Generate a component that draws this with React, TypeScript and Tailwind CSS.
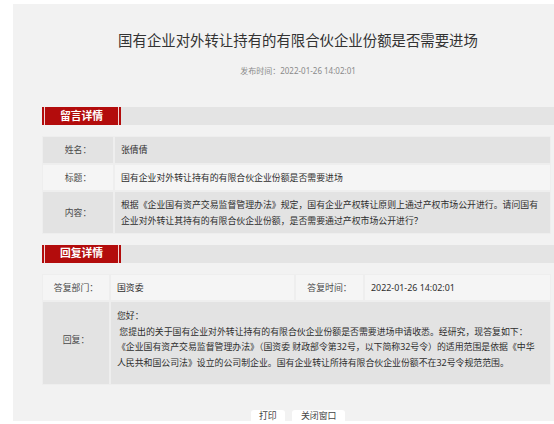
import React from "react";

const font = "font-['Noto_Sans','Noto_Sans_CJK_SC',sans-serif]";

function SectionHeader({ title }: { title: string }) {
  return (
    <div className="flex h-[18px] w-[512px] bg-[#e4e4e4]">
      <div className="flex h-full w-[79px] bg-[#b30c0c] px-[2px]">
        <div className="flex flex-1 items-center justify-center border-x-[1.5px] border-[#f2d6d6] bg-[#b30c0c] text-[10.8px] font-bold leading-none text-white">
          {title}
        </div>
      </div>
    </div>
  );
}

export default function App() {
  const cell = "border border-[#eeeeee] text-[8.9px] text-[#2e2e2e]";
  const label = "flex items-center justify-center text-[#4a4a4a]";
  return (
    <div className={`h-[424px] w-[554px] overflow-hidden bg-white ${font}`}>
      <div className="ml-[13px] mt-[4px] flex h-[417px] w-[570px] flex-col bg-[#f2f2f2]">
        <div className="pt-[28px] text-center text-[14.4px] leading-[18px] text-[#333]">
          国有企业对外转让持有的有限合伙企业份额是否需要进场
        </div>
        <div className="mt-[15px] text-center text-[8px] leading-[12px] text-[#8a8a8a]">
          发布时间：2022-01-26 14:02:01
        </div>
        <div className="mx-[23px] mt-[6px] h-px bg-[#dcdcdc]" />

        <div className="ml-[29px] mt-[24px]">
          <SectionHeader title="留言详情" />
        </div>

        <div className="ml-[29px] mt-[11px] grid w-[509px] grid-cols-[72px_1fr]">
          <div className={`${cell} ${label} h-[28px] bg-[#e3e3e3]`}>姓名：</div>
          <div className={`${cell} flex h-[28px] items-center bg-[#e3e3e3] px-[6px]`}>张倩倩</div>
          <div className={`${cell} ${label} h-[27px] bg-[#f5f5f5]`}>标题：</div>
          <div className={`${cell} flex h-[27px] items-center bg-[#f5f5f5] px-[6px]`}>
            国有企业对外转让持有的有限合伙企业份额是否需要进场
          </div>
          <div className={`${cell} ${label} h-[43px] bg-[#e3e3e3]`}>内容：</div>
          <div className={`${cell} flex h-[43px] flex-col justify-center whitespace-nowrap bg-[#e3e3e3] px-[6px] leading-[15.6px]`}>
            <span>根据《企业国有资产交易监督管理办法》规定，国有企业产权转让原则上通过产权市场公开进行。请问国有</span>
            <span>企业对外转让其持有的有限合伙企业份额，是否需要通过产权市场公开进行？</span>
          </div>
        </div>

        <div className="ml-[29px] mt-[10.5px]">
          <SectionHeader title="回复详情" />
        </div>

        <div className="ml-[29px] mt-[11px] grid w-[509px] grid-cols-[68px_185px_69px_1fr]">
          <div className={`${cell} ${label} h-[27.5px] bg-[#f5f5f5]`}>答复部门：</div>
          <div className={`${cell} flex h-[27.5px] items-center bg-[#f5f5f5] px-[6px]`}>国资委</div>
          <div className={`${cell} ${label} h-[27.5px] bg-[#f5f5f5]`}>答复时间：</div>
          <div className={`${cell} flex h-[27.5px] items-center bg-[#f5f5f5] px-[6px]`}>2022-01-26 14:02:01</div>
          <div className={`${cell} ${label} h-[84px] bg-[#e3e3e3] pb-[7px]`}>回复：</div>
          <div className={`${cell} col-span-3 flex h-[84px] flex-col whitespace-nowrap bg-[#e3e3e3] px-[6px] pt-[6px] leading-[15.6px]`}>
            <span>您好：</span>
            <span>&nbsp;您提出的关于国有企业对外转让持有的有限合伙企业份额是否需要进场申请收悉。经研究，现答复如下：</span>
            <span>《企业国有资产交易监督管理办法》（国资委 财政部令第32号，以下简称32号令）的适用范围是依据《中华</span>
            <span>人民共和国公司法》设立的公司制企业。国有企业转让所持有限合伙企业份额不在32号令规范范围。</span>
          </div>
        </div>

        <div className="mt-[24.5px] flex justify-center gap-[7.5px]">
          <button className="flex h-[14px] w-[34px] items-center justify-center rounded-[3px] bg-white text-[8.9px] leading-none text-[#444]">
            打印
          </button>
          <button className="flex h-[14px] w-[53px] items-center justify-center rounded-[3px] bg-white text-[8.9px] leading-none text-[#444]">
            关闭窗口
          </button>
        </div>
      </div>
    </div>
  );
}
